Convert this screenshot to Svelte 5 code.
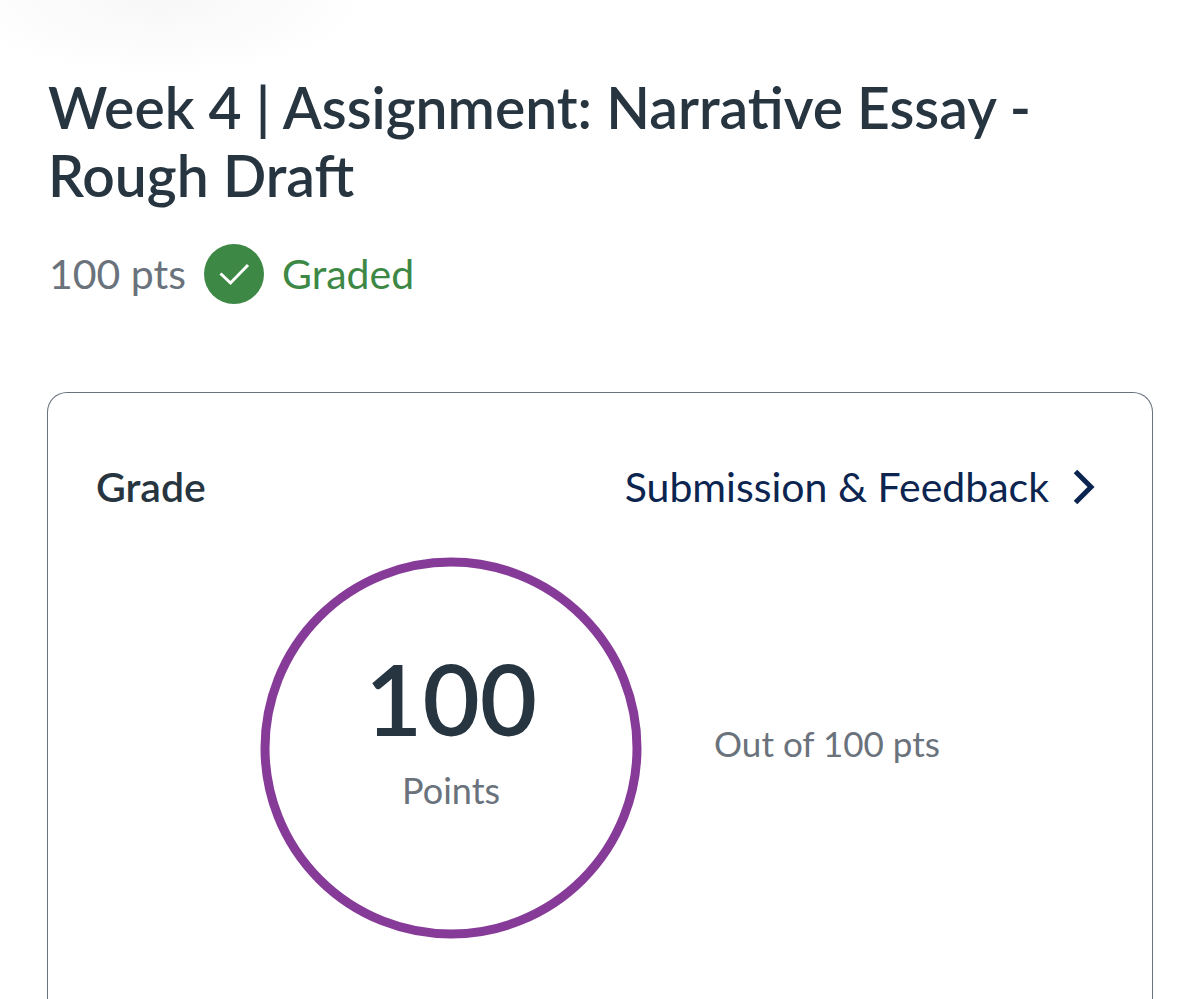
<script lang="ts">
    let title = "Week 4 | Assignment: Narrative Essay - Rough Draft";
    let score = 100;
    let possible = 100;

    const radius = 186;
    const circumference = 2 * Math.PI * radius;

    let filled = $derived(circumference * Math.min(score / possible, 1));
</script>

<main class="assignment">
    <header>
        <h1>{title}</h1>
        <div class="status">
            <span class="points">{possible} pts</span>
            <svg class="check" viewBox="0 0 60 60" aria-hidden="true">
                <circle cx="30" cy="30" r="30" />
                <path d="M16.5 29.5 L26.5 39 L44 21" />
            </svg>
            <span class="graded">Graded</span>
        </div>
    </header>

    <section class="card">
        <div class="card-head">
            <h2>Grade</h2>
            <a href="#submission">
                Submission &amp; Feedback
                <svg class="chevron" viewBox="0 0 22 36" aria-hidden="true">
                    <path d="M2.5 2.5 L18 18 L2.5 33.5" />
                </svg>
            </a>
        </div>
        <div class="grade">
            <div class="ring">
                <svg viewBox="0 0 382 382" aria-hidden="true">
                    <circle cx="191" cy="191" r={radius} stroke-dasharray="{filled} {circumference}" />
                </svg>
                <div class="score">
                    <strong>{score}</strong>
                    <span>Points</span>
                </div>
            </div>
            <p>Out of {possible} pts</p>
        </div>
    </section>
</main>

<style>
    :global(body) {
        margin: 0;
        background: #fff;
    }

    .assignment {
        box-sizing: border-box;
        min-height: 100vh;
        display: flex;
        flex-direction: column;
        padding: 73px 47px 0;
        font-family: Lato, sans-serif;
        color: #273540;
        background: radial-gradient(ellipse 210px 75px at 160px 0, #f7f7f7, #fff);
    }

    h1 {
        margin: 0;
        padding: 0 1px;
        font-size: 57px;
        line-height: 68px;
        font-weight: 600;
    }

    .status {
        display: flex;
        align-items: center;
        gap: 18px;
        margin-top: 35px;
        padding: 0 2px;
        font-size: 41px;
        line-height: 60px;
    }

    .points {
        color: #6a727c;
    }

    .check {
        width: 60px;
        height: 60px;
    }

    .check circle {
        fill: #3d8845;
    }

    .check path {
        fill: none;
        stroke: #fff;
        stroke-width: 3;
    }

    .graded {
        color: #3d8845;
    }

    .card {
        flex: 1;
        margin-top: 88px;
        padding: 64px 48px 0;
        border: 1px solid #6a727c;
        border-bottom: none;
        border-radius: 20px 20px 0 0;
    }

    .card-head {
        display: flex;
        justify-content: space-between;
        align-items: center;
        font-size: 41px;
        line-height: 60px;
    }

    h2 {
        margin: 0;
        font-size: 41px;
        font-weight: 600;
    }

    a {
        display: flex;
        align-items: center;
        gap: 24px;
        padding-right: 9px;
        color: #0c2550;
        text-decoration: none;
    }

    .chevron {
        width: 22px;
        height: 36px;
    }

    .chevron path {
        fill: none;
        stroke: #0c2550;
        stroke-width: 5;
    }

    .grade {
        display: flex;
        justify-content: center;
        align-items: center;
        gap: 72px;
        margin-top: 40px;
    }

    .ring {
        display: grid;
        width: 382px;
        height: 382px;
    }

    .ring > * {
        grid-area: 1 / 1;
    }

    .ring circle {
        fill: none;
        stroke: #873b98;
        stroke-width: 9;
    }

    .score {
        display: flex;
        flex-direction: column;
        align-items: center;
        padding-top: 80px;
        color: #6a727c;
        font-size: 36px;
        line-height: 62px;
    }

    strong {
        font-size: 99px;
        line-height: 122px;
        font-weight: 600;
        color: #273540;
    }

    p {
        margin: 0;
        padding-bottom: 10px;
        font-size: 35px;
        line-height: 60px;
        color: #6a727c;
    }
</style>
